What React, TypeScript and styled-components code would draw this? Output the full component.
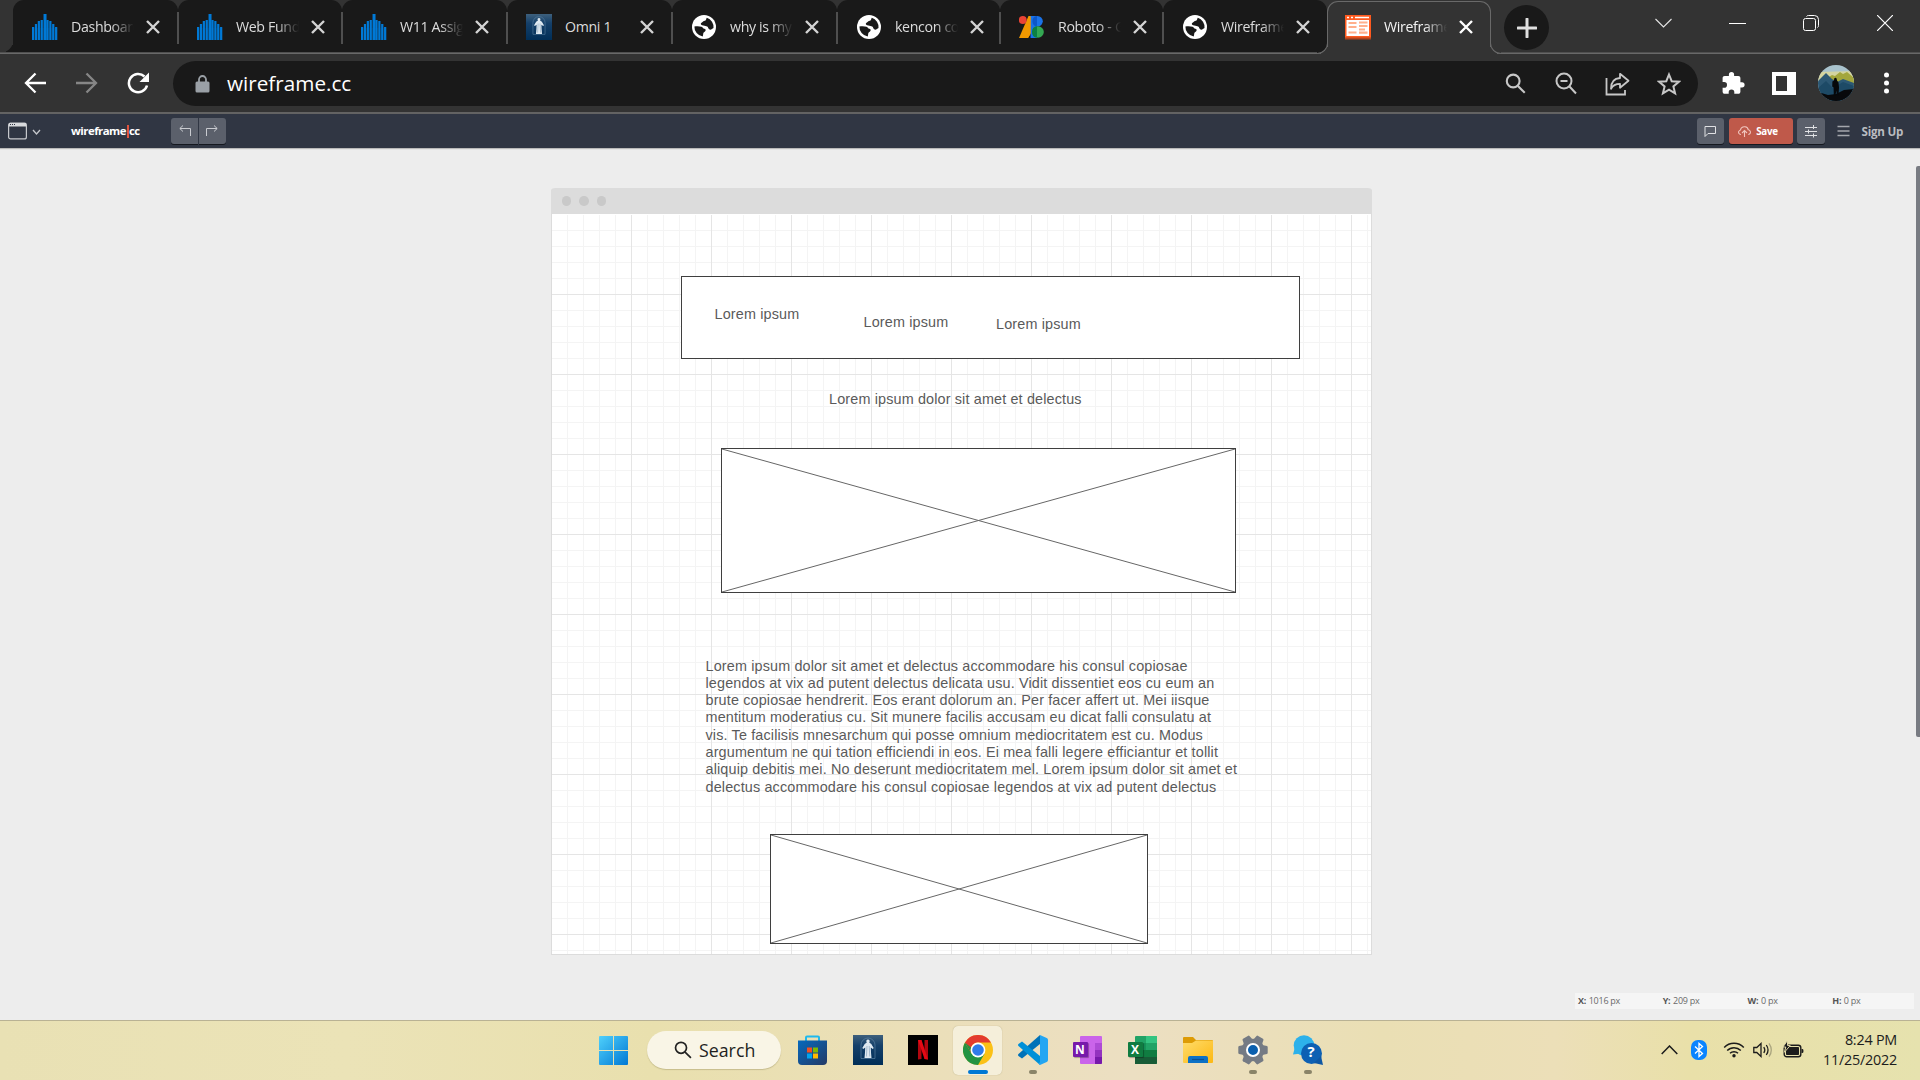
import React from "react";
import styled, { createGlobalStyle, css } from "styled-components";

const uiFont = `"Open Sans", "Noto Sans", sans-serif`;

const GlobalStyle = createGlobalStyle`
  *, *::before, *::after { box-sizing: border-box; }
  html, body { margin: 0; padding: 0; overflow: hidden; background: #ededed; }
  svg { display: block; flex: none; }
`;

const Screen = styled.div`
  width: 1920px;
  height: 1080px;
  display: flex;
  flex-direction: column;
  overflow: hidden;
  font-family: ${uiFont};
`;

/* ---------- browser tabs ---------- */

const TabStrip = styled.div`
  height: 54px;
  flex: none;
  display: flex;
  align-items: flex-start;
  padding-left: 13px;
  background: #333333;
  box-shadow: inset 0 -1px 0 #696969, inset 0 -2px 0 #505050;
`;

const flare = css`
  content: "";
  position: absolute;
  bottom: 0;
  width: 11px;
  height: 11px;
`;

const Tab = styled.div<{ $w: number; $first?: boolean; $last?: boolean }>`
  position: relative;
  width: ${(p) => p.$w}px;
  height: 52px;
  flex: none;
  display: flex;
  align-items: center;
  padding: 2px 0 0 18px;
  background: #191919;
  border-radius: 11px 11px ${(p) => (p.$last ? "11px" : "0")} 0;
  color: #dcdcdc;

  ${(p) =>
    p.$first &&
    css`
      &::before {
        ${flare}
        left: -11px;
        border-radius: 0 0 11px 0;
        box-shadow: 4px 4px 0 #191919;
        clip-path: inset(0);
      }
    `}
`;

const TabDivider = styled.i`
  position: absolute;
  right: -1px;
  top: 12px;
  width: 2px;
  height: 32px;
  background: #4f4f4f;
  z-index: 1;
`;

const ActiveTab = styled.div`
  position: relative;
  width: 164px;
  height: 53px;
  margin-top: 1px;
  flex: none;
  display: flex;
  align-items: center;
  padding: 0 0 2px 16px;
  background: #333333;
  border: 1.5px solid #696969;
  border-bottom: none;
  border-radius: 11px 11px 0 0;
  color: #f4f4f4;

  &::before,
  &::after {
    ${flare}
    border: solid #696969;
    border-width: 0 1px 1px 0;
    border-radius: 0 0 11px 0;
    background: #191919;
    left: -11px;
    box-shadow: 4px 4px 0 #333333;
    clip-path: inset(0 -1px 0 0);
  }
  &::after {
    left: auto;
    right: -11px;
    border-width: 0 0 1px 1px;
    border-radius: 0 0 0 11px;
    background: #333333;
    box-shadow: -4px 4px 0 #333333;
    clip-path: inset(0 0 0 -1px);
  }
`;

const TabTitle = styled.span<{ $full?: boolean }>`
  width: 66px;
  margin: 0 9px 0 13px;
  white-space: nowrap;
  font-size: 14.2px;
  line-height: 22px;
  letter-spacing: -0.35px;
  mask-image: ${(p) => (p.$full ? "none" : "linear-gradient(to right, #000 40px, transparent 63px)")};
`;

const NewTab = styled.div`
  width: 45px;
  height: 45px;
  margin: 5px 0 0 13px;
  border-radius: 50%;
  background: #191919;
  display: grid;
  place-items: center;
`;

const WindowControls = styled.div`
  margin: 15px 27px 0 auto;
  display: flex;
  gap: 57px;
`;

/* ---------- address bar ---------- */

const NavBar = styled.div`
  height: 60px;
  flex: none;
  display: flex;
  align-items: center;
  padding: 0 30px 0 24px;
  background: #333333;
  border-bottom: 2px solid #636363;
`;

const NavButtons = styled.div`
  display: flex;
  gap: 29.5px;
`;

const Omnibox = styled.div`
  flex: 1;
  height: 45px;
  margin: 1px 23px 0 23px;
  padding: 0 17px 0 22px;
  border-radius: 23px;
  background: #191919;
  display: flex;
  align-items: center;
`;

const Url = styled.span`
  margin-left: 17px;
  margin-top: -1px;
  flex: 1;
  color: #fff;
  font-size: 20.7px;
  line-height: 28px;
`;

const OmniActions = styled.div`
  display: flex;
  align-items: center;
  gap: 27.4px;
`;

const Extensions = styled.div`
  display: flex;
  align-items: center;
`;

const Avatar = styled.div`
  width: 36px;
  height: 36px;
  margin: 0 29px 0 22px;
  border-radius: 50%;
  overflow: hidden;
`;

/* ---------- editor bar ---------- */

const EditorBar = styled.div`
  height: 34px;
  flex: none;
  display: flex;
  align-items: center;
  padding: 0 17px 0 8px;
  background: #303643;
  z-index: 1;
  box-shadow: 0 1px 1px rgba(0, 0, 0, 0.22);
`;

const Brand = styled.div`
  margin: 0 31px 0 30px;
  width: 69px;
  color: #fff;
  font-size: 11.4px;
  font-weight: 700;
  letter-spacing: -0.5px;
  line-height: 16px;
  display: flex;
  align-items: center;
  white-space: nowrap;
`;

const Caret = styled.i`
  width: 2px;
  height: 13px;
  background: #e0533f;
  margin: 0 0.4px 0 0.6px;
`;

const ButtonGroup = styled.div`
  display: flex;
  gap: 1px;
`;

const BarButton = styled.div<{ $w: number; $radius?: string; $tone?: string }>`
  width: ${(p) => p.$w}px;
  height: 26px;
  display: flex;
  align-items: center;
  justify-content: center;
  gap: 5px;
  background: ${(p) => p.$tone ?? "#5b606b"};
  border-radius: ${(p) => p.$radius ?? "3px"};
  box-shadow: 0 1px 0 #15181f;
  color: #fff;
  font-size: 9.8px;
  font-weight: 700;
  letter-spacing: -0.25px;
`;

const SaveButton = styled(BarButton)`
  margin-left: 1px;
  padding-right: 5px;
`;

const BarRight = styled.div`
  margin-left: auto;
  display: flex;
  align-items: center;
  gap: 4px;
`;

const SignUp = styled.span`
  margin-left: 8px;
  color: #babcc0;
  font-size: 11.6px;
  font-weight: 700;
  letter-spacing: -0.25px;
`;

/* ---------- editor area ---------- */

const Workspace = styled.main`
  position: relative;
  flex: 1;
  background: #ededed;
  padding: 40px 0 0 551px;
`;

const Scrollbar = styled.div`
  position: absolute;
  right: 0;
  top: 18px;
  width: 4px;
  height: 571px;
  border-radius: 2px 0 0 2px;
  background: #787b82;
`;

const Frame = styled.section`
  width: 821px;
  height: 767px;
  display: flex;
  flex-direction: column;
  border: 1px solid #dcdcdc;
  border-top: none;
  border-radius: 4px 4px 0 0;
  background: #fff;
`;

const FrameHeader = styled.div`
  height: 26px;
  flex: none;
  margin: 0 -1px;
  border-radius: 4px 4px 0 0;
  background: #dcdcdc;
  display: flex;
  align-items: center;
  gap: 8px;
  padding-left: 10.5px;
`;

const FrameDot = styled.i`
  width: 9.5px;
  height: 9.5px;
  border-radius: 50%;
  background: #c9c9c9;
`;

const Grid = styled.div`
  position: relative;
  flex: 1;
  margin-top: 1px;
  background-image: linear-gradient(to right, transparent 79px, #e5e5e5 79px),
    linear-gradient(to bottom, transparent 79px, #e5e5e5 79px),
    linear-gradient(to right, transparent 15px, #f4f4f4 15px),
    linear-gradient(to bottom, transparent 15px, #f4f4f4 15px);
  background-size: 80px 80px, 80px 80px, 16px 16px, 16px 16px;
`;

/* Shapes sit anywhere on the free canvas, measured from the grid origin. */
const Shape = styled.div<{ $x: number; $y: number; $w: number; $h: number }>`
  position: absolute;
  left: ${(p) => p.$x}px;
  top: ${(p) => p.$y}px;
  width: ${(p) => p.$w}px;
  height: ${(p) => p.$h}px;
  border: 1px solid #3f3f3f;
  background: #fff;
`;

const Note = styled.div<{ $x: number; $y: number; $w?: number }>`
  position: absolute;
  left: ${(p) => p.$x}px;
  top: ${(p) => p.$y}px;
  width: ${(p) => (p.$w ? `${p.$w}px` : "auto")};
  white-space: nowrap;
  color: #5a5a5a;
  font-family: "Liberation Sans", Arial, sans-serif;
  font-size: 14.4px;
  line-height: 17.28px;
  letter-spacing: 0.145px;
`;

const StatusBar = styled.div`
  position: absolute;
  left: 1575px;
  bottom: 11px;
  width: 339px;
  height: 16px;
  display: grid;
  grid-template-columns: repeat(4, 84.75px);
  align-items: center;
  padding-left: 3px;
  background: #f5f5f5;
  color: #6a6a6a;
  font-size: 9px;
  line-height: 16px;
  letter-spacing: -0.26px;

  b {
    color: #555;
    margin-right: 0.6px;
  }
`;

/* ---------- taskbar ---------- */

const Taskbar = styled.footer`
  height: 60px;
  flex: none;
  display: grid;
  grid-template-columns: 586px 1fr auto;
  border-top: 1px solid #b9b294;
  background: linear-gradient(
    90deg,
    #e9e1b4 0%,
    #ebe3b7 18%,
    #e9e0ae 34%,
    #ebdfb9 48%,
    #ecdfc2 59%,
    #eadfb4 72%,
    #ecdfb8 81%,
    #e9e0a9 88%,
    #e6e2ae 100%
  );
`;

const Apps = styled.div`
  display: flex;
  align-items: center;
  padding-bottom: 1px;
`;

const AppSlot = styled.div<{ $active?: boolean }>`
  width: 49px;
  height: 49px;
  margin: 0 3px;
  border-radius: 5px;
  display: grid;
  grid-template-rows: 44px 5px;
  justify-items: center;
  align-items: center;
  background: ${(p) => (p.$active ? "#f5efda" : "transparent")};
  box-shadow: ${(p) => (p.$active ? "0 0 1px rgba(120,110,60,.5)" : "none")};

  svg {
    margin-top: 5px;
  }
`;

const Indicator = styled.i<{ $active?: boolean }>`
  width: ${(p) => (p.$active ? 20 : 8)}px;
  height: 4px;
  border-radius: 2px;
  background: ${(p) => (p.$active ? "#0078d4" : "#8a8468")};
`;

const SearchPill = styled.div`
  width: 134px;
  height: 38px;
  margin: 0 5px 0 6px;
  border-radius: 19px;
  display: flex;
  align-items: center;
  padding-left: 27px;
  gap: 7px;
  background: #f9f5e6;
  box-shadow: 0 1px 1px rgba(120, 110, 60, 0.3);
  color: #1f1f1f;
  font-size: 17.8px;
`;

const AppRow = styled.div`
  display: flex;
  margin-left: -1px;
`;

const Tray = styled.div`
  display: flex;
  align-items: center;
  padding: 0 23px 2px 0;
`;

const Spacer = styled.i<{ $w: number }>`
  width: ${(p) => p.$w}px;
`;

const Clock = styled.div`
  width: 84px;
  text-align: right;
  color: #1c1c1c;
  font-size: 14.4px;
  line-height: 20px;
  letter-spacing: -0.24px;
  white-space: nowrap;
`;

/* ---------- drawings ---------- */

const BarsIcon = () => (
  <svg width="26" height="26" viewBox="0 0 26 26">
    <rect x="0" y="14" width="25.500" height="12" fill="#0079d6" opacity=".14" />
    <g fill="#0079d6">
      {[13, 10, 7, 6, 0, 6, 7, 10, 13].map((top, i) => (
        <rect key={i} x={i * 2.88} y={top} width={i === 4 ? 3 : 2.2} height={26 - top} />
      ))}
    </g>
  </svg>
);

const StatueIcon = ({ size = 26 }: { size?: number }) => (
  <svg width={size} height={size} viewBox="0 0 30 30">
    <defs>
      <linearGradient id="statue" x1="0" y1="0" x2="0" y2="1">
        <stop offset="0" stopColor="#3e607d" />
        <stop offset="0.35" stopColor="#15406a" />
        <stop offset="1" stopColor="#002e57" />
      </linearGradient>
    </defs>
    <rect width="30" height="30" fill="url(#statue)" />
    <path d="M8 23.500V10a7 7 0 0 1 14 0v13.500z" fill="none" stroke="#5e84a5" strokeWidth=".8" opacity=".8" />
    <path
      d="M15 4.500a1.700 1.700 0 0 1 1.200 2.900l2.100 1.600 2.400 4-.9.900-2-1.500.2 5 .5 5.600h-7l.5-5.600.2-5-2 1.500-.9-.9 2.400-4 2.100-1.600A1.700 1.700 0 0 1 15 4.500z"
      fill="#dfe9f1"
    />
    <path d="M14 11l-.6 10.500M16.200 11l.6 10.500" stroke="#8aa6be" strokeWidth=".7" />
  </svg>
);

const GlobeIcon = () => (
  <svg width="24" height="24" viewBox="0 0 24 24">
    <circle cx="12" cy="12" r="12" fill="#fff" />
    <path
      d="M2.400 11.500C4.500 11 7.500 11 9.500 11.800c1.300.6 1.500 1.700 2.700 2 1.300.3 1.800 1 1.300 2-.5 1.100-1.900 1.200-2.200 2.500-.2 1-.1 2-.6 3.200A9.700 9.700 0 0 1 2.400 11.500z"
      fill="#191919"
    />
    <path
      d="M14.800 2.800a9.700 9.700 0 0 1 6.700 10.300c-1.200.5-1.900 1.500-3.200 1.600-1.600.1-1.800-1.400-2.500-2.600-.6-1-2-.8-3.300-1.300-1.500-.6-3.500-.3-3.700-1.700-.1-1.300 1.400-1.300 2-2.300.7-1.100 1.700-.6 2.700-1.300 1-.7.5-1.800 1.300-2.700z"
      fill="#191919"
    />
  </svg>
);

const FontsIcon = () => (
  <svg width="25" height="24" viewBox="0 0 25 24">
    <path d="M9.500 1H16v10L9 23H0z" fill="#f29900" />
    <path d="M11.500 1H18v22h-6.500z" fill="#1a73e8" />
    <path d="M11.500 1v18L9 23H1z" fill="#f29900" />
    <circle cx="3.800" cy="5" r="3.900" fill="#ea4335" />
    <circle cx="18.500" cy="6.200" r="5.300" fill="#1a73e8" />
    <path d="M18 1a5.300 5.300 0 0 0 0 10.500z" fill="#0d57c9" />
    <circle cx="19" cy="17" r="5.800" fill="#34a853" />
    <path d="M18 11.300a5.800 5.800 0 0 0 0 11.500z" fill="#0b8043" />
  </svg>
);

const WireframeIcon = () => (
  <svg width="26" height="25" viewBox="0 0 26 25">
    <rect y="21" width="26" height="3.500" fill="#b3441d" />
    <rect width="26" height="22.500" fill="#ff5a1f" />
    <rect x="1.500" y="5" width="22.500" height="16" fill="#fff" />
    <path d="M2 2.500h2M6 2.500h2M10 2.500h14" stroke="#fff" strokeWidth="1.600" />
    <path d="M3.500 8h8M14 7.500h8.500M14 11h8.500M3.500 12h8M3.500 17.500h8M14 14.500h6M14 17.700h8.500" stroke="#ffb08c" strokeWidth="2.200" />
  </svg>
);

const CloseIcon = ({ color = "#d4d4d4" }: { color?: string }) => (
  <svg width="14" height="14" viewBox="0 0 14 14">
    <path d="M1 1l12 12M13 1L1 13" stroke={color} strokeWidth="2.400" />
  </svg>
);

const SearchIcon = ({ size, color, w = 2 }: { size: number; color: string; w?: number }) => (
  <svg width={size} height={size} viewBox="0 0 20 20" fill="none" stroke={color} strokeWidth={w}>
    <circle cx="7.800" cy="7.600" r="6.100" />
    <path d="M12.300 12.300l6.500 6.500" />
  </svg>
);

const PlaceholderCross = () => (
  <svg width="100%" height="100%" preserveAspectRatio="none" viewBox="0 0 100 100">
    <path d="M0 0L100 100M100 0L0 100" stroke="#666" strokeWidth="1" vectorEffect="non-scaling-stroke" />
  </svg>
);

const AvatarArt = () => (
  <svg width="36" height="36" viewBox="0 0 36 36">
    <rect width="36" height="36" fill="#a9c3cd" />
    <path d="M0 7l36-1v10H0z" fill="#d3d4a0" />
    <path d="M8 14l6-4 3 1 5-4 3 2 4-2 7 6v8H8z" fill="#a3a63c" />
    <path d="M0 16l8-8 6 6 5 3 6-3 11 4v18H0z" fill="#2c5874" />
    <path d="M0 23l8-7 7 7 10-6 11 4v15H0z" fill="#1d4a66" />
    <path d="M0 27l10 3 8-1 8-4 10-1v12H0z" fill="#08090b" />
    <path d="M16.200 13.500q1.300-1.500 2.400 0l.4 2 1.500 2 .5 5-.5 8h-1.600l-.6-5-.8 5h-1.700l-.2-8-1.400-1 .2-5 1.600-1z" fill="#06080a" />
  </svg>
);

const ChromeIcon = () => (
  <svg width="30" height="30" viewBox="0 0 30 30">
    <circle cx="15" cy="15" r="15" fill="#fbc116" />
    <path d="M2 7.500A15 15 0 0 0 15 30l6.500-11.300L15 15 8.500 18.700z" fill="#229342" />
    <path d="M2 7.500A15 15 0 0 1 28 7.500H15A7.500 7.500 0 0 0 8.500 18.700z" fill="#e33b2e" />
    <path d="M2 7.500L8.500 18.700A7.500 7.500 0 0 1 8 12.500z" fill="#229342" />
    <circle cx="15" cy="15" r="7.400" fill="#fff" />
    <circle cx="15" cy="15" r="5.800" fill="#2f7bea" />
  </svg>
);

const VSCodeIcon = () => (
  <svg width="30" height="30" viewBox="0 0 30 30">
    <path d="M22 0v9L4 23.500l-3.500-2.500q-1-1 0-2z" fill="#0072b8" />
    <path d="M22 30v-9L4 6.500.5 9q-1 1 0 2z" fill="#0090d8" />
    <path d="M22 0l6.700 3Q30 3.700 30 5v20q0 1.300-1.300 2L22 30l-1.200-1.200L22 27z" fill="#24a6f2" />
  </svg>
);

const LetterTile = styled.div<{ $c: string }>`
  position: absolute;
  left: 0;
  top: 12px;
  width: 15px;
  height: 15px;
  background: ${(p) => p.$c};
  color: #fff;
  font-size: 12px;
  font-weight: 700;
  line-height: 15px;
  text-align: center;
  border-radius: 1px;
  box-shadow: 1px 1px 1px rgba(0, 0, 0, 0.3);
`;

const OfficeBox = styled.div`
  position: relative;
  width: 30px;
`;

const OneNoteIcon = () => (
  <OfficeBox>
    <svg width="30" height="30" viewBox="0 0 30 30">
      <rect x="7" y="1" width="22" height="28" rx="1" fill="#ca64ea" />
      <path d="M22 8h7v7h-7z" fill="#ae4bd5" />
      <path d="M22 15h7v7h-7z" fill="#9332bf" />
      <path d="M22 22h7v6q0 1-1 1h-6z" fill="#7719aa" />
    </svg>
    <LetterTile $c="#7719aa">N</LetterTile>
  </OfficeBox>
);

const ExcelIcon = () => (
  <OfficeBox>
    <svg width="30" height="30" viewBox="0 0 30 30">
      <rect x="7" y="1" width="22" height="28" rx="1" fill="#21a366" />
      <path d="M18 1h10q1 0 1 1v6H18z" fill="#33c481" />
      <path d="M7 15h11v7H7z" fill="#107c41" />
      <path d="M18 15h11v7H18z" fill="#107c41" />
      <path d="M7 8h11v7H7z" fill="#159358" />
      <path d="M7 22h22v6q0 1-1 1H7z" fill="#185c37" />
    </svg>
    <LetterTile $c="#107c41">X</LetterTile>
  </OfficeBox>
);

const StoreIcon = () => (
  <svg width="29" height="30" viewBox="0 0 29 30">
    <defs>
      <linearGradient id="bag" x1="0" y1="0" x2="1" y2="1">
        <stop offset="0" stopColor="#0669bd" />
        <stop offset="1" stopColor="#243a66" />
      </linearGradient>
    </defs>
    <path d="M8 7V2.500q0-1 1-1h11q1 0 1 1V7" fill="none" stroke="#1fb9ee" strokeWidth="2" />
    <path d="M0 5.500h29V26q0 4-4 4H4q-4 0-4-4z" fill="url(#bag)" />
    <path d="M9 12.500h5v5H9z" fill="#f25022" />
    <path d="M15 12.500h5v5h-5z" fill="#7fba00" />
    <path d="M9 18.500h5v5H9z" fill="#00a4ef" />
    <path d="M15 18.500h5v5h-5z" fill="#ffb900" />
  </svg>
);

const FolderIcon = () => (
  <svg width="30" height="30" viewBox="0 0 30 30">
    <defs>
      <linearGradient id="folder" x1="0" y1="0" x2="1" y2="1">
        <stop offset="0" stopColor="#ffdc6b" />
        <stop offset="1" stopColor="#fcb813" />
      </linearGradient>
    </defs>
    <path d="M0 3q0-1 1-1h9l3 3h16q1 0 1 1v6H0z" fill="#dd9b05" />
    <path d="M0 8h9l4-2.500h17V27q0 1-1 1H1q-1 0-1-1z" fill="url(#folder)" />
    <path d="M5 28v-5q0-2 2-2h16q2 0 2 2v5z" fill="#0c71c6" />
    <path d="M9 24.500h12" stroke="#0a4f93" strokeWidth="1.200" />
  </svg>
);

const GearIcon = () => (
  <svg width="30" height="30" viewBox="0 0 30 30">
    <g fill="#757b84">
      <circle cx="15" cy="15" r="11.300" />
      {[0, 60, 120, 180, 240, 300].map((a) => (
        <path key={a} d="M10 6l1-5q.3-.7 1-.7h6q.7 0 1 .7l1 5z" transform={`rotate(${a + 30} 15 15)`} />
      ))}
    </g>
    <circle cx="15" cy="15" r="6" fill="#0a5fae" stroke="#fff" strokeWidth="2" />
  </svg>
);

const HelpBubble = styled.b`
  position: absolute;
  left: 8px;
  top: 11px;
  width: 21px;
  text-align: center;
  color: #fff;
  font-size: 15px;
  line-height: 21px;
`;

const HelpIcon = () => (
  <OfficeBox>
    <svg width="30" height="30" viewBox="0 0 30 30">
      <circle cx="11" cy="10.500" r="10.300" fill="#2db1ea" />
      <path d="M2 12L0 19.500l8-1z" fill="#2db1ea" />
      <circle cx="18.500" cy="18.500" r="10.500" fill="#0d60b3" />
      <path d="M28 21l2 9-9-2z" fill="#0d57a4" />
    </svg>
    <HelpBubble>?</HelpBubble>
  </OfficeBox>
);

const tabs = [
  { w: 165, title: "Dashboard", icon: <BarsIcon /> },
  { w: 164, title: "Web Fund", icon: <BarsIcon /> },
  { w: 165, title: "W11 Assig", icon: <BarsIcon /> },
  { w: 165, title: "Omni 1", icon: <StatueIcon />, full: true },
  { w: 165, title: "why is my", icon: <GlobeIcon /> },
  { w: 163, title: "kencon co", icon: <GlobeIcon /> },
  { w: 163, title: "Roboto - G", icon: <FontsIcon /> },
  { w: 164, title: "Wireframe", icon: <GlobeIcon /> },
];

const IconSlot = styled.span`
  width: 27px;
  height: 26px;
  display: grid;
  place-items: center;
`;

const paragraph = [
  "Lorem ipsum dolor sit amet et delectus accommodare his consul copiosae",
  "legendos at vix ad putent delectus delicata usu. Vidit dissentiet eos cu eum an",
  "brute copiosae hendrerit. Eos erant dolorum an. Per facer affert ut. Mei iisque",
  "mentitum moderatius cu. Sit munere facilis accusam eu dicat falli consulatu at",
  "vis. Te facilisis mnesarchum qui posse omnium mediocritatem est cu. Modus",
  "argumentum ne qui tation efficiendi in eos. Ei mea falli legere efficiantur et tollit",
  "aliquip debitis mei. No deserunt mediocritatem mel. Lorem ipsum dolor sit amet et",
  "delectus accommodare his consul copiosae legendos at vix ad putent delectus",
];

export default function App() {
  return (
    <Screen>
      <GlobalStyle />
      <TabStrip>
        {tabs.map((t, i) => (
          <Tab key={i} $w={t.w} $first={i === 0} $last={i === tabs.length - 1}>
            <IconSlot>{t.icon}</IconSlot>
            <TabTitle $full={t.full}>{t.title}</TabTitle>
            <CloseIcon />
            {i < tabs.length - 1 && <TabDivider />}
          </Tab>
        ))}
        <ActiveTab>
          <IconSlot>
            <WireframeIcon />
          </IconSlot>
          <TabTitle>Wireframe</TabTitle>
          <CloseIcon color="#fff" />
        </ActiveTab>
        <NewTab>
          <svg width="20" height="20" viewBox="0 0 20 20">
            <path d="M10 1v18M1 10h18" stroke="#e0e0e0" strokeWidth="3" strokeLinecap="round" />
          </svg>
        </NewTab>
        <WindowControls>
          <svg width="17" height="16" viewBox="0 0 17 16" fill="none" stroke="#e6e6e6" strokeWidth="1.100">
            <path d="M.5 4l8 8 8-8" />
          </svg>
          <svg width="17" height="16" viewBox="0 0 17 16">
            <path d="M0 8.500h17" stroke="#fff" />
          </svg>
          <svg width="17" height="16" viewBox="0 0 17 16" fill="none" stroke="#fff">
            <rect x=".5" y="3.500" width="12" height="12" rx="2" />
            <path d="M3.500 1.500q.5-1 2-1h6q4 0 4 4v6q0 1.500-1 2" />
          </svg>
          <svg width="16" height="16" viewBox="0 0 16 16">
            <path d="M0 0l16 16M16 0L0 16" stroke="#fff" strokeWidth="1.200" />
          </svg>
        </WindowControls>
      </TabStrip>

      <NavBar>
        <NavButtons>
          <svg width="22" height="22" viewBox="0 0 22 22" fill="none" stroke="#fff" strokeWidth="2.300">
            <path d="M22 11H2.500M11.500 1.500L2 11l9.500 9.500" />
          </svg>
          <svg width="22" height="22" viewBox="0 0 22 22" fill="none" stroke="#868686" strokeWidth="2.300">
            <path d="M0 11h19.500M10.500 1.500L20 11l-9.500 9.500" />
          </svg>
          <svg width="23" height="22" viewBox="0 0 23 22">
            <path d="M17.500 4.500A9.200 9.200 0 1 0 20 13.500" fill="none" stroke="#fff" strokeWidth="2.500" />
            <path d="M22 .5v9.500h-9.500z" fill="#fff" />
          </svg>
        </NavButtons>
        <Omnibox>
          <svg width="15" height="18" viewBox="0 0 15 18">
            <path d="M4 7V4.500a3.500 3.500 0 0 1 7 0V7" fill="none" stroke="#9aa0a6" strokeWidth="1.800" />
            <rect x=".5" y="6.500" width="14" height="11" rx="1.500" fill="#9aa0a6" />
          </svg>
          <Url>wireframe.cc</Url>
          <OmniActions>
            <SearchIcon size={21} color="#c7c7c7" />
            <svg width="24" height="23" viewBox="0 0 24 23" fill="none" stroke="#c7c7c7" strokeWidth="2">
              <circle cx="11" cy="9" r="7.500" />
              <path d="M16.500 14.500l6.500 7M7.500 9h7" />
            </svg>
            <svg width="25" height="24" viewBox="0 0 25 24" fill="none" stroke="#c7c7c7" strokeWidth="1.800">
              <path d="M1.500 6v16.500H20V18" />
              <path d="M15 1.800l8.500 7-8.500 7v-4c-5 0-7.500 2-9 5 0-6 3-10.300 9-10.800z" strokeLinejoin="round" />
            </svg>
            <svg width="24" height="24" viewBox="0 0 24 24" fill="none" stroke="#c7c7c7" strokeWidth="2">
              <path d="M12 2.500l2.700 6.700 7.200.5-5.500 4.700 1.700 7L12 17.600l-6.100 3.800 1.700-7L2.100 9.700l7.200-.5z" />
            </svg>
          </OmniActions>
        </Omnibox>
        <Extensions>
          <svg width="24" height="24" viewBox="0 0 24 24">
            <path
              d="M21 11.200h-1.600V7.100c0-1.200-.9-2.100-2.100-2.100h-4.200V3.500a2.600 2.600 0 0 0-5.200 0V5H3.700C2.500 5 1.600 5.900 1.600 7.100v4h1.600a2.800 2.800 0 0 1 0 5.600H1.600v4c0 1.200.9 2.100 2.100 2.100h4v-1.600a2.800 2.800 0 0 1 5.600 0v1.600h4c1.200 0 2.100-.9 2.100-2.100v-4.300H21a2.600 2.600 0 0 0 0-5.200z"
              fill="#fff"
            />
          </svg>
          <Spacer $w={27} />
          <svg width="24" height="23" viewBox="0 0 24 23">
            <path d="M0 0h24v23H0zM4 4v15h11V4z" fill="#fff" fillRule="evenodd" />
          </svg>
          <Avatar>
            <AvatarArt />
          </Avatar>
          <svg width="7" height="22" viewBox="0 0 7 22" fill="#fff">
            <circle cx="3.500" cy="3" r="2.500" />
            <circle cx="3.500" cy="11" r="2.500" />
            <circle cx="3.500" cy="19" r="2.500" />
          </svg>
        </Extensions>
      </NavBar>

      <EditorBar>
        <svg width="33" height="18" viewBox="0 0 33 18" fill="none">
          <rect x=".6" y="1.100" width="17.800" height="15.800" rx="2" stroke="#c6c8cc" strokeWidth="1.200" />
          <path d="M1 1h17v3.500H1z" fill="#d8dadd" />
          <path d="M2 2.500h1M4 2.500h1M6 2.500h1" stroke="#303643" />
          <path d="M25 8l3.500 4L32 8" stroke="#c6c8cc" strokeWidth="1.300" />
        </svg>
        <Brand>
          wireframe
          <Caret />
          cc
        </Brand>
        <ButtonGroup>
          <BarButton $w={27} $radius="3px 0 0 3px">
            <svg width="12" height="12" viewBox="0 0 12 12" fill="none" stroke="#c9cbd0">
              <path d="M4 .5L.8 3.500 4 6.500M1 3.500h10.500V11" />
            </svg>
          </BarButton>
          <BarButton $w={27} $radius="0 3px 3px 0">
            <svg width="14" height="12" viewBox="0 0 14 12" fill="none" stroke="#c9cbd0">
              <path d="M8 .5l3.200 3-3.200 3M11 3.500H.5V11" />
            </svg>
          </BarButton>
        </ButtonGroup>
        <BarRight>
          <BarButton $w={27}>
            <svg width="12" height="12" viewBox="0 0 12 12" fill="none" stroke="#e0e1e4">
              <path d="M1 1.500h10.500v7H4L1 11.500z" />
            </svg>
          </BarButton>
          <SaveButton $w={64} $tone="#bf594a">
            <svg width="13" height="11" viewBox="0 0 13 11" fill="none" stroke="#f0c6bf" strokeWidth="1.100">
              <path d="M3 8.500C.8 8.300 0 6.500 1 5c.5-.8 1-.9 1.500-1C3 1.500 5 .6 7 .8c2 .2 3 1.500 3.200 3C12 4 12.700 5.500 12.300 7c-.3 1-1 1.400-2 1.500M6.500 11V5M4 7l2.500-2.500L9 7" />
            </svg>
            Save
          </SaveButton>
          <BarButton $w={28}>
            <svg width="12" height="13" viewBox="0 0 12 13" fill="none" stroke="#e0e1e4">
              <path d="M0 2.500h12M0 6.500h12M0 10.500h12M8.500 0v4M3.500 4.500v4M8.500 8.500v4" />
            </svg>
          </BarButton>
          <svg width="21" height="12" viewBox="0 0 21 12">
            <path d="M8.500 1.500h12M8.500 6h12M8.500 10.500h12" stroke="#a4a7ad" strokeWidth="1.500" />
          </svg>
          <SignUp>Sign Up</SignUp>
        </BarRight>
      </EditorBar>

      <Workspace>
        <Frame>
          <FrameHeader>
            <FrameDot />
            <FrameDot />
            <FrameDot />
          </FrameHeader>
          <Grid>
            <Shape $x={129} $y={61} $w={619} $h={83} />
            <Note $x={162.5} $y={91}>Lorem ipsum</Note>
            <Note $x={311.5} $y={99}>Lorem ipsum</Note>
            <Note $x={444} $y={101}>Lorem ipsum</Note>
            <Note $x={277} $y={176}>Lorem ipsum dolor sit amet et delectus</Note>
            <Shape $x={169} $y={233} $w={515} $h={145}>
              <PlaceholderCross />
            </Shape>
            <Note $x={153.5} $y={442.6} $w={540}>
              {paragraph.map((line) => (
                <div key={line}>{line}</div>
              ))}
            </Note>
            <Shape $x={218} $y={619} $w={378} $h={110}>
              <PlaceholderCross />
            </Shape>
          </Grid>
        </Frame>
        <Scrollbar />
        <StatusBar>
          <span><b>X:</b> 1016 px</span>
          <span><b>Y:</b> 209 px</span>
          <span><b>W:</b> 0 px</span>
          <span><b>H:</b> 0 px</span>
        </StatusBar>
      </Workspace>

      <Taskbar>
        <span />
        <Apps>
          <AppSlot>
            <svg width="29" height="29" viewBox="0 0 29 29">
              <defs>
                <linearGradient id="win" x1="0" y1="0" x2="1" y2="1">
                  <stop offset="0" stopColor="#4fd0fb" />
                  <stop offset="1" stopColor="#0078d4" />
                </linearGradient>
              </defs>
              <path d="M0 1q0-1 1-1h13v14H0zM15 0h13q1 0 1 1v13H15zM0 15h14v14H1q-1 0-1-1zM15 15h14v13q0 1-1 1H15z" fill="url(#win)" />
            </svg>
          </AppSlot>
          <SearchPill>
            <SearchIcon size={18} color="#222" w={1.9} />
            Search
          </SearchPill>
          <AppRow>
            <AppSlot><StoreIcon /></AppSlot>
            <AppSlot><StatueIcon size={30} /></AppSlot>
            <AppSlot>
              <svg width="30" height="30" viewBox="0 0 30 30">
                <rect width="30" height="30" fill="#000" />
                <path d="M10 5h3.500v19l-3.500.5zM16.500 5H20v19.500l-3.500-.5z" fill="#b1060f" />
                <path d="M10 5h3.500L20 24.500l-3.500-.5z" fill="#e50914" />
              </svg>
            </AppSlot>
            <AppSlot $active><ChromeIcon /><Indicator $active /></AppSlot>
            <AppSlot><VSCodeIcon /><Indicator /></AppSlot>
            <AppSlot><OneNoteIcon /></AppSlot>
            <AppSlot><ExcelIcon /></AppSlot>
            <AppSlot><FolderIcon /></AppSlot>
            <AppSlot><GearIcon /><Indicator /></AppSlot>
            <AppSlot><HelpIcon /><Indicator /></AppSlot>
          </AppRow>
        </Apps>
        <Tray>
          <svg width="17" height="10" viewBox="0 0 17 10" fill="none" stroke="#1c1c1c" strokeWidth="1.500">
            <path d="M.7 9l7.800-8 7.800 8" />
          </svg>
          <Spacer $w={13} />
          <svg width="16" height="20" viewBox="0 0 16 20">
            <rect width="16" height="20" rx="7" fill="#0a84ff" />
            <path d="M4 6.500l7.500 7L8 16.500v-13l3.500 3-7.500 7" fill="none" stroke="#fff" strokeWidth="1.300" />
          </svg>
          <Spacer $w={16} />
          <svg width="22" height="17" viewBox="0 0 22 17" fill="none" stroke="#1c1c1c" strokeWidth="1.500">
            <path d="M1.200 6.500a13.600 13.600 0 0 1 19.600 0M4.200 9.500a9.500 9.500 0 0 1 13.600 0M7 12.300a5.700 5.700 0 0 1 8 0" />
            <circle cx="11" cy="14.700" r="1.700" fill="#1c1c1c" stroke="none" />
          </svg>
          <Spacer $w={8} />
          <svg width="21" height="16" viewBox="0 0 21 16" fill="none" stroke="#1c1c1c" strokeWidth="1.300">
            <path d="M.8 5.500h3L8 1.500v13l-4.200-4h-3z" />
            <path d="M10.800 5q2 3 0 6M13.300 3q3.500 5 0 10" />
            <path d="M16 1.300q4.600 6.700 0 13.400" opacity=".3" />
          </svg>
          <Spacer $w={9} />
          <svg width="21" height="18" viewBox="0 0 21 18">
            <rect x="1.200" y="4.200" width="16.600" height="11.600" rx="2.500" fill="none" stroke="#1c1c1c" strokeWidth="1.400" />
            <rect x="3" y="6" width="13" height="8" rx=".8" fill="#1c1c1c" />
            <path d="M18.500 8h1q1 0 1 2t-1 2h-1z" fill="#1c1c1c" />
            <path d="M4.500-.5L0 6h2.800L1.400 11.300 7.200 4.500H4.500z" fill="#1c1c1c" stroke="#e8e0ad" strokeWidth=".9" />
          </svg>
          <Spacer $w={9} />
          <Clock>
            8:24 PM
            <br />
            11/25/2022
          </Clock>
        </Tray>
      </Taskbar>
    </Screen>
  );
}
